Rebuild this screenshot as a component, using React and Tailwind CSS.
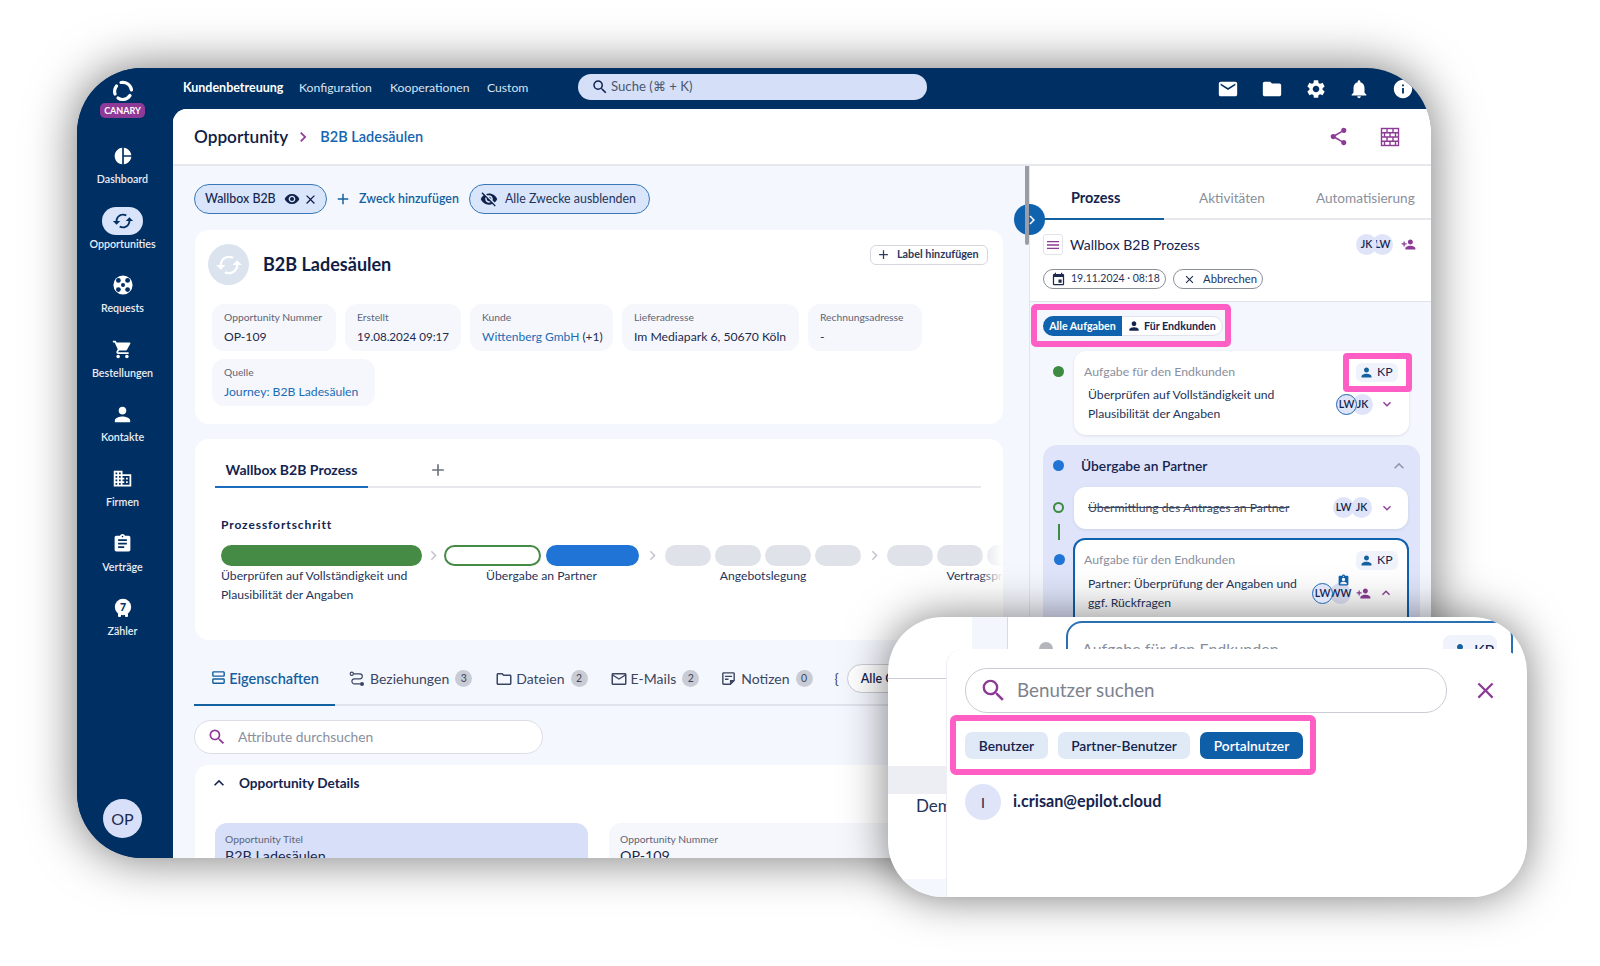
import React from "react";
import {
  MdEmail, MdFolder, MdSettings, MdNotifications, MdInfo, MdShare, MdSearch, MdClose, MdVisibility, MdVisibilityOff,
  MdAdd, MdPerson, MdPersonAdd, MdEvent, MdMenu, MdExpandMore, MdExpandLess, MdShoppingCart, MdDomain, MdAssignment,
  MdCached, MdPieChart, MdChevronRight, MdAssignmentInd, MdOutlineViewAgenda,
  MdOutlineFolder, MdOutlineEmail, MdOutlineStickyNote2,
} from "react-icons/md";

const Logo = () => (
  <svg width="22" height="22" viewBox="0 0 22 22" fill="none" stroke="white" strokeWidth="3.2" strokeLinecap="round">
    <path d="M9 2.5 C14 1.5 19 5 19.5 10" />
    <path d="M18 15.5 C15 20 9 20.5 6 18" />
    <path d="M3 14 C2 11 3 8 4.5 6" />
  </svg>
);

const Wheel = () => (
  <svg width="20" height="20" viewBox="0 0 20 20">
    <circle cx="10" cy="10" r="9.6" fill="white" />
    <circle cx="5.4" cy="5.4" r="2.4" fill="#003063" />
    <circle cx="14.6" cy="5.4" r="2.4" fill="#003063" />
    <circle cx="5.4" cy="14.6" r="2.4" fill="#003063" />
    <circle cx="14.6" cy="14.6" r="2.4" fill="#003063" />
    <circle cx="10" cy="10" r="2" fill="#003063" />
  </svg>
);

const Meter = () => (
  <svg width="18" height="20" viewBox="0 0 18 20">
    <circle cx="9" cy="9" r="8.2" fill="white" />
    <rect x="4" y="15" width="3" height="4" rx="1" fill="white" />
    <rect x="11" y="15" width="3" height="4" rx="1" fill="white" />
    <text x="9" y="13" textAnchor="middle" fontSize="10.5" fontWeight="900" fontFamily="Lato, sans-serif" fill="#003063">7</text>
  </svg>
);

const Bricks = () => (
  <svg width="20" height="20" viewBox="0 0 20 20" fill="none" stroke="#8d3a96" strokeWidth="1.4">
    <rect x="1.5" y="1.5" width="17" height="17" />
    <path d="M1.5 5.8h17M1.5 10h17M1.5 14.2h17M7 1.5v4.3M13 1.5v4.3M4.5 5.8v4.2M10 5.8v4.2M15.5 5.8v4.2M7 10v4.2M13 10v4.2M4.5 14.2v4.3M10 14.2v4.3M15.5 14.2v4.3" />
  </svg>
);

const Relation = () => (
  <svg width="16" height="16" viewBox="0 0 16 16" fill="none" stroke="#3b4660" strokeWidth="1.2">
    <circle cx="2.8" cy="2.8" r="1.6" />
    <path d="M4.6 2.8h6.2a2.5 2.5 0 0 1 0 5H5.4a2.5 2.5 0 0 0 0 5h6" />
    <circle cx="13" cy="13" r="2" fill="#3b4660" stroke="none" />
  </svg>
);

const navItems = [
  { label: "Dashboard", icon: <MdPieChart size={20} color="white" /> },
  { label: "Opportunities", icon: <MdCached size={22} color="#003063" />, active: true },
  { label: "Requests", icon: <Wheel /> },
  { label: "Bestellungen", icon: <MdShoppingCart size={21} color="white" /> },
  { label: "Kontakte", icon: <MdPerson size={23} color="white" /> },
  { label: "Firmen", icon: <MdDomain size={21} color="white" /> },
  { label: "Verträge", icon: <MdAssignment size={21} color="white" /> },
  { label: "Zähler", icon: <Meter /> },
];

const Sidebar = () => (
  <aside className="w-[96px] shrink-0 flex flex-col items-center pr-[5px] bg-[#003063] pt-[12px] pb-[20px]">
    <Logo />
    <div className="mt-[1px] w-[45px] h-[15px] rounded-[5px] bg-[#8f3a97] text-white text-[9px] font-bold leading-[15px] text-center">CANARY</div>
    <nav className="mt-[24px] flex flex-col gap-[14.6px] w-full">
      {navItems.map((n) => (
        <div key={n.label} className="h-[50px] flex flex-col items-center">
          <div className={n.active ? "w-[41px] h-[28px] rounded-[14px] bg-[#d9e3fa] flex items-center justify-center" : "w-[41px] h-[28px] flex items-center justify-center"}>{n.icon}</div>
          <div className="mt-[2px] text-[10.7px] leading-[14px] font-semibold text-[#e8edf6]">{n.label}</div>
        </div>
      ))}
    </nav>
    <div className="mt-auto w-[39px] h-[39px] rounded-full bg-[#d8dff8] text-[#1b2a52] text-[16px] flex items-center justify-center">OP</div>
  </aside>
);

const TopBar = () => (
  <header className="h-[41px] shrink-0 flex items-center text-white">
    <div className="flex items-center text-[12.2px] text-[#dbe4f2]">
      <span className="w-[116px] ml-[10px] text-[12.5px] font-bold text-white">Kundenbetreuung</span>
      <span className="w-[91px]">Konfiguration</span>
      <span className="w-[97px]">Kooperationen</span>
      <span className="w-[91px]">Custom</span>
    </div>
    <div className="w-[349px] h-[26px] mb-[3px] rounded-full bg-[#d5e0f8] flex items-center pl-[13px] text-[13.2px] text-[#4a5670]">
      <MdSearch size={18} color="#12264f" />
      <span className="ml-[2px]">Suche (⌘ + K)</span>
    </div>
    <div className="ml-auto flex items-center gap-[21.7px] pr-[17px]">
      <MdEmail size={22} /><MdFolder size={22} /><MdSettings size={22} /><MdNotifications size={22} /><MdInfo size={22} />
    </div>
  </header>
);

const Field = ({ label, value, link, extra, w, size }) => (
  <div className={`rounded-[12px] bg-[#f6f7fc] px-[12px] pt-[6px] h-[47px] ${w}`}>
    <div className="text-[10.3px] leading-[14px] text-[#5d6577] whitespace-nowrap">{label}</div>
    <div className={`mt-[5px] leading-[16px] whitespace-nowrap ${size} ${link ? "text-[#1b6cb5]" : "text-[#1c2a4e]"}`}>
      {value}{extra ? <span className="text-[#1c2a4e]"> {extra}</span> : null}
    </div>
  </div>
);

const Bar = ({ cls }) => <div className={`h-[21px] rounded-full ${cls}`} />;
const Chev = ({ w }) => (
  <div className={`${w} h-[21px] flex items-center justify-center`}><MdChevronRight size={19} color="#c4c7cf" /></div>
);

const Progress = () => (
  <div className="flex items-start mt-[12px] text-[12.2px] leading-[19px] text-[#26345a]">
    <div className="w-[201px] shrink-0">
      <Bar cls="bg-[#458a45]" />
      <div>Überprüfen auf Vollständigkeit und Plausibilität der Angaben</div>
    </div>
    <Chev w="w-[22px] shrink-0" />
    <div className="w-[195px] shrink-0">
      <div className="flex gap-[5px]"><Bar cls="flex-1 bg-white border-2 border-[#458a45]" /><Bar cls="flex-1 bg-[#1f74d6]" /></div>
      <div className="text-center">Übergabe an Partner</div>
    </div>
    <Chev w="w-[26px] shrink-0" />
    <div className="w-[196px] shrink-0">
      <div className="flex gap-[4px]">{[0, 1, 2, 3].map((i) => <Bar key={i} cls="flex-1 bg-[#e0e2e9]" />)}</div>
      <div className="text-center">Angebotslegung</div>
    </div>
    <Chev w="w-[26px] shrink-0" />
    <div className="w-[196px] shrink-0">
      <div className="flex gap-[4px]">{[0, 1, 2, 3].map((i) => <Bar key={i} cls="flex-1 bg-[#e0e2e9]" />)}</div>
      <div className="ml-[10px] text-center">Vertragsprüfung</div>
    </div>
  </div>
);

const Badge = ({ n }) => (
  <span className="ml-[6px] w-[17px] h-[17px] rounded-full bg-[#c9ccd4] text-[#3b4660] text-[10.5px] flex items-center justify-center">{n}</span>
);

const LeftPane = () => (
  <div className="flex-1 min-w-0 bg-[#f5f7fe] pl-[21px] pr-[24px] pt-[18px] overflow-hidden">
    <div className="h-[30px] flex items-center text-[12.4px]">
      <div className="w-[133px] h-[30px] rounded-full bg-[#d9e5fb] border border-[#3a78b5] flex items-center pl-[10px] text-[#14264f]">
        <span className="font-medium">Wallbox B2B</span>
        <MdVisibility size={16} className="ml-[8px]" color="#10224a" />
        <MdClose size={15} className="ml-[3px]" color="#10224a" />
      </div>
      <MdAdd size={18} color="#14619f" className="ml-[7px]" />
      <span className="ml-[7px] w-[110px] font-semibold text-[#14619f]">Zweck hinzufügen</span>
      <div className="w-[181px] h-[30px] rounded-full bg-[#d9e5fb] border border-[#3a78b5] flex items-center pl-[10px] text-[#26345a]">
        <MdVisibilityOff size={18} color="#10224a" />
        <span className="ml-[7px] whitespace-nowrap">Alle Zwecke ausblenden</span>
      </div>
    </div>

    <section className="ml-px mt-[16px] h-[194px] w-[808px] rounded-[14px] bg-white relative pl-[13px] pt-[14px]">
      <div className="flex items-center">
        <div className="w-[41px] h-[41px] rounded-full bg-[#dbe3ee] flex items-center justify-center"><MdCached size={28} color="white" /></div>
        <h2 className="ml-[14px] text-[18px] font-bold text-[#0f1d45]">B2B Ladesäulen</h2>
        <button className="ml-auto mr-[15px] w-[118px] h-[20px] mt-[-20px] rounded-[6px] bg-white border border-[#d5d7de] flex items-center pl-[5px] text-[10.8px] font-bold text-[#2b3a5e]">
          <MdAdd size={15} color="#2b3a5e" /><span className="ml-[6px]">Label hinzufügen</span>
        </button>
      </div>
      <div className="ml-[4px] mt-[19px] flex flex-wrap gap-x-[9px] gap-y-[8px] w-[720px]">
        <Field w="w-[124px]" size="text-[12.2px]" label="Opportunity Nummer" value="OP-109" />
        <Field w="w-[116px]" size="text-[11.6px]" label="Erstellt" value="19.08.2024 09:17" />
        <Field w="w-[143px]" size="text-[12px]" label="Kunde" value="Wittenberg GmbH" link extra="(+1)" />
        <Field w="w-[177px]" size="text-[12.2px]" label="Lieferadresse" value="Im Mediapark 6, 50670 Köln" />
        <Field w="w-[114px]" size="text-[12.2px]" label="Rechnungsadresse" value="-" />
        <Field w="w-[163px]" size="text-[12.2px]" label="Quelle" value="Journey: B2B Ladesäulen" link />
      </div>
    </section>

    <section className="ml-px mt-[15px] h-[201px] w-[808px] rounded-[14px] bg-white pt-[17px] relative overflow-hidden">
      <div className="ml-[20px] w-[766px] flex border-b-2 border-[#e6e8ee] h-[32px]">
        <div className="w-[153px] h-[32px] border-b-2 border-[#1b6bbf] text-center text-[14px] font-bold text-[#14244f] leading-[28px]">Wallbox B2B Prozess</div>
        <MdAdd size={20} color="#6b7280" className="ml-[60px] mt-[4px]" />
      </div>
      <div className="ml-[26px]">
        <div className="mt-[29px] text-[12px] leading-[16px] font-bold tracking-[0.9px] text-[#14244f]">Prozessfortschritt</div>
        <Progress />
      </div>
      <div className="absolute right-0 top-[100px] w-[24px] h-[80px] bg-gradient-to-r from-transparent to-white" />
    </section>

    <div className="mt-[25px] w-[900px] h-[41px] flex items-start border-b-2 border-[#e0e3ec] text-[14px] text-[#3b4660] relative">
      <div className="w-[141px] h-[41px] border-b-2 border-[#14619f] flex items-start justify-center pt-[3px] text-[14.5px] font-semibold text-[#14619f]">
        <MdOutlineViewAgenda size={17} className="mt-[1px] mr-[2px]" /> Eigenschaften
      </div>
      <div className="ml-[14px] flex items-center pt-[3px]"><Relation /><span className="ml-[5px]">Beziehungen</span><Badge n="3" /></div>
      <div className="ml-[23px] flex items-center pt-[3px]"><MdOutlineFolder size={18} /><span className="ml-[3px]">Dateien</span><Badge n="2" /></div>
      <div className="ml-[22px] flex items-center pt-[3px]"><MdOutlineEmail size={18} /><span className="ml-[3px]">E-Mails</span><Badge n="2" /></div>
      <div className="ml-[21px] flex items-center pt-[3px]"><MdOutlineStickyNote2 size={17} /><span className="ml-[4px]">Notizen</span><Badge n="0" /></div>
      <span className="ml-[22px] pt-[3px]">{"{"}</span>
      <div className="ml-[8px] w-[120px] h-[29px] -mt-[1px] rounded-full border border-[#c9ccd4] bg-white pl-[13px] text-[12.5px] font-semibold text-[#14244f] leading-[27px]">Alle Gruppen</div>
    </div>

    <div className="mt-[14px] w-[349px] h-[34px] rounded-full bg-white border border-[#dcdee5] flex items-center pl-[12px] text-[13.8px] text-[#8a8f9c]">
      <MdSearch size={20} color="#8d3a96" /><span className="ml-[11px]">Attribute durchsuchen</span>
    </div>

    <section className="ml-px mt-[11px] w-[808px] h-[200px] rounded-[14px] bg-white">
      <div className="flex items-center h-[36px] pl-[14px] text-[13.6px] font-bold text-[#14244f]">
        <MdExpandLess size={20} color="#14244f" /><span className="ml-[10px]">Opportunity Details</span>
      </div>
      <div className="mt-[22px] ml-[20px] flex gap-[21px]">
        <div className="w-[373px] h-[60px] rounded-[12px] bg-[#d8dff8] pl-[10px] pt-[9px]">
          <div className="text-[10.3px] leading-[14px] text-[#5d6577]">Opportunity Titel</div>
          <div className="text-[14.3px] leading-[18px] text-[#1c2a4e] mt-[1px]">B2B Ladesäulen</div>
        </div>
        <div className="w-[373px] h-[60px] rounded-[12px] bg-[#f6f7fc] pl-[11px] pt-[9px]">
          <div className="text-[10.3px] leading-[14px] text-[#5d6577]">Opportunity Nummer</div>
          <div className="text-[14.3px] leading-[18px] text-[#1c2a4e] mt-[1px]">OP-109</div>
        </div>
      </div>
    </section>
  </div>
);

const Av = ({ t, ring, top }) => (
  <span className={`w-[21px] h-[21px] rounded-full bg-[#dfe4f8] flex items-center justify-center text-[10.5px] font-semibold text-[#14244f] ${top ? "relative z-10" : ""} ${ring ? "border border-[#1d68b0]" : ""}`}>{t}</span>
);

const Pair = ({ a, b, ring, gap }) => (
  <div className={`flex ${gap}`}><Av t={a} ring={ring} top /><Av t={b} /></div>
);

const KP = () => (
  <div className="w-[42px] h-[19px] rounded-[6px] bg-[#f0f3fc] flex items-center pl-[3px] text-[12.3px] text-[#14244f]">
    <MdPerson size={15} color="#14619f" /><span className="ml-[3px]">KP</span>
  </div>
);

const Dot = ({ cls, top }) => <span className={`absolute left-[-21px] w-[11px] h-[11px] rounded-full ${top} ${cls}`} />;

const RightPane = () => (
  <div className="w-[402px] shrink-0 bg-white border-l border-[#e3e5ea] relative">
    <div className="h-[54px] flex border-b-2 border-[#e6e8ee] text-[13.6px] relative">
      <div className="w-[134px] h-[54px] border-b-2 border-[#14619f] pl-[41px] pt-[23px] leading-[18px] text-[14.5px] font-bold text-[#14244f]">Prozess</div>
      <div className="ml-[35px] pt-[23px] leading-[18px] text-[#8a8f9c]">Aktivitäten</div>
      <div className="ml-[51px] pt-[23px] leading-[18px] text-[#8a8f9c]">Automatisierung</div>
    </div>
    <div className="h-[82px] border-b border-[#e0e3ec] pl-[13px] pr-[14px] pt-[14px]">
      <div className="flex items-center h-[21px]">
        <div className="w-[20px] h-[21px] rounded-[3px] border border-[#e0e3ec] flex items-center justify-center"><MdMenu size={16} color="#8d3a96" /></div>
        <span className="ml-[7px] text-[14px] text-[#14244f]">Wallbox B2B Prozess</span>
        <div className="ml-auto mr-[8px]"><Pair a="JK" b="LW" gap="-space-x-[5px]" /></div>
        <MdPersonAdd size={15} color="#8d3a96" className="mr-[1px]" />
      </div>
      <div className="mt-[14px] flex gap-[7px] text-[11.3px] text-[#26345a]">
        <div className="w-[123px] h-[20px] rounded-full border border-[#8b8f98] flex items-center pl-[7px] whitespace-nowrap text-[10.5px]"><MdEvent size={15} color="#1b2a4e" /><span className="ml-[5px]">19.11.2024 · 08:18</span></div>
        <div className="w-[90px] h-[20px] rounded-full border border-[#8b8f98] flex items-center pl-[9px]"><MdClose size={13} color="#1b2a4e" /><span className="ml-[7px]">Abbrechen</span></div>
      </div>
    </div>
    <div className="bg-[#f5f7fe] h-[600px] pl-[13px] pt-[14px]">
      <div className="relative w-[180px] h-[20px] flex rounded-full bg-white border border-[#e0e3ec] text-[10.7px] font-bold">
        <div className="w-[79px] h-[20px] -mt-px -ml-px rounded-l-full bg-[#0f62ae] text-white text-center leading-[20px]">Alle Aufgaben</div>
        <div className="flex items-center pl-[5px] text-[#14244f]"><MdPerson size={14} color="#14244f" /><span className="ml-[3px]">Für Endkunden</span></div>
        <div className="absolute -left-[13px] -top-[13px] w-[200px] h-[43px] border-[6px] border-[#ff5ec4] rounded-[5px]" />
      </div>

      <div className="relative ml-[31px] mt-[15px] w-[335px] h-[84px] rounded-[12px] bg-white shadow-[0_1px_3px_rgba(30,40,90,0.12)] pl-[10px] pt-[13px]">
        <Dot cls="bg-[#3d8b40]" top="top-[15px]" />
        <div className="text-[12.3px] leading-[16px] text-[#8a8f9c]">Aufgabe für den Endkunden</div>
        <div className="absolute right-[11px] top-[12px]"><KP /></div>
        <div className="absolute -right-[3px] top-[2px] w-[69px] h-[39px] border-[6px] border-[#ff5ec4] rounded-[4px]" />
        <div className="ml-[4px] mt-[5px] w-[210px] text-[12.2px] leading-[19px] text-[#26345a]">Überprüfen auf Vollständigkeit und Plausibilität der Angaben</div>
        <div className="absolute right-[36px] top-[43px]"><Pair a="LW" b="JK" ring gap="-space-x-[5px]" /></div>
        <MdExpandMore size={16} color="#8d3a96" className="absolute right-[14px] top-[45px]" />
      </div>

      <div className="relative mt-[10px] w-[377px] h-[300px] rounded-[14px] bg-[#dfe4fa] pl-[31px] pt-[2px]">
        <div className="relative h-[38px] mb-[2px] flex items-center">
          <Dot cls="bg-[#1f74d6]" top="top-[13px]" />
          <span className="ml-[7px] text-[13.8px] font-semibold text-[#14244f]">Übergabe an Partner</span>
          <MdExpandLess size={20} color="#9097ab" className="absolute right-[11px] top-[9px]" />
        </div>
        <div className="relative w-[334px] h-[42px] rounded-[12px] bg-white flex items-center pl-[14px] text-[12.2px] text-[#3b4660] shadow-[0_1px_3px_rgba(30,40,90,0.1)]">
          <span className="absolute left-[-21px] top-[15px] w-[11px] h-[11px] rounded-full border-2 border-[#3d8b40]" />
          <span className="absolute left-[-16px] top-[37px] w-[2px] h-[16px] bg-[#3d8b40]" />
          <span className="line-through">Übermittlung des Antrages an Partner</span>
          <div className="absolute right-[36px] top-[10px]"><Pair a="LW" b="JK" gap="-space-x-[3px]" /></div>
          <MdExpandMore size={16} color="#8d3a96" className="absolute right-[13px] top-[13px]" />
        </div>
        <div className="relative mt-[9px] w-[336px] -ml-px h-[120px] rounded-[12px] bg-white border-2 border-[#0f62ae] pl-[9px] pt-[12px]">
          <Dot cls="bg-[#1f74d6]" top="top-[14px]" />
          <div className="text-[12.3px] leading-[16px] text-[#8a8f9c]">Aufgabe für den Endkunden</div>
          <div className="absolute right-[9px] top-[11px]"><KP /></div>
          <div className="ml-[4px] mt-[6px] w-[225px] text-[12.2px] leading-[19px] text-[#26345a]">Partner: Überprüfung der Angaben und ggf. Rückfragen</div>
          <div className="absolute left-[237px] top-[43px]"><Pair a="LW" b="WW" ring gap="-space-x-[3px]" /></div>
          <MdAssignmentInd size={13} color="#0f62ae" className="absolute left-[262px] top-[34px]" />
          <MdPersonAdd size={15} color="#8d3a96" className="absolute left-[281px] top-[46px]" />
          <MdExpandLess size={16} color="#8d3a96" className="absolute right-[13px] top-[45px]" />
        </div>
      </div>
    </div>
    <div className="absolute left-[-16px] top-[38px] w-[31px] h-[31px] rounded-full bg-[#0f62ae] flex items-center justify-center">
      <MdChevronRight size={18} color="white" className="ml-[4px]" />
    </div>
    <div className="absolute left-[-5px] top-0 w-[4px] h-[79px] rounded-b-full bg-[#9a9da5]" />
  </div>
);

const Overlay = () => (
  <div className="absolute left-[888px] top-[617px] w-[639px] h-[280px] rounded-[55px] bg-white overflow-hidden shadow-[0_0_45px_rgba(0,0,0,0.5)]">
    <div className="absolute left-[84px] top-0 w-[35px] h-[40px] bg-[#f4f6fd]" />
    <div className="absolute left-[119px] top-0 w-[1px] h-[40px] bg-[#d8dae2]" />
    <div className="absolute left-0 top-[61px] w-[60px] h-[1px] bg-[#c9ccd4]" />
    <div className="absolute left-0 top-[149px] w-[60px] h-[28px] bg-[#eceef3]" />
    <div className="absolute left-[28px] top-[176px] text-[17px] text-[#26345a]">Demo</div>
    <div className="absolute left-0 top-[262px] w-[60px] h-[18px] bg-[#f5f7fe]" />
    <span className="absolute left-[151px] top-[25px] w-[14px] h-[14px] rounded-full bg-[#b4b6bc]" />
    <div className="absolute left-[178px] top-[4px] w-[447px] h-[120px] rounded-[16px] bg-white border-2 border-[#2a70b5] pl-[14px] pt-[14px] text-[16px] text-[#8a8f9c]">
      Aufgabe für den Endkunden
      <div className="absolute right-[14px] top-[12px] w-[54px] h-[30px] rounded-[8px] bg-[#f0f3fc] flex items-center pl-[8px] text-[#14244f]"><MdPerson size={18} color="#14619f" /><span className="ml-[5px]">KP</span></div>
    </div>
    <div className="absolute left-[58px] top-[32px] right-0 bottom-0 rounded-tl-[16px] rounded-tr-[30px] bg-white border-l border-[#eceef3] pl-[18px]">
      <div className="flex items-center mt-[19px]">
        <div className="w-[482px] h-[45px] rounded-[22px] border border-[#c9ccd4] flex items-center pl-[13px] text-[18.8px] text-[#7d828e]">
          <MdSearch size={29} color="#8d3a96" /><span className="ml-[9px]">Benutzer suchen</span>
        </div>
        <MdClose size={27} color="#8d3a96" className="ml-[25px]" />
      </div>
      <div className="relative flex gap-[10px] mt-[19px] text-[13.8px] font-semibold">
        <div className="w-[83px] h-[27px] rounded-[7px] bg-[#e0eaf6] text-[#14244f] text-center leading-[27px]">Benutzer</div>
        <div className="w-[132px] h-[27px] rounded-[7px] bg-[#e0eaf6] text-[#14244f] text-center leading-[27px]">Partner-Benutzer</div>
        <div className="w-[103px] h-[27px] rounded-[7px] bg-[#0f5ea8] text-white text-center leading-[27px]">Portalnutzer</div>
        <div className="absolute -left-[15px] -top-[17px] w-[366px] h-[60px] border-[6px] border-[#ff5ec4] rounded-[6px]" />
      </div>
      <div className="mt-[25px] flex items-center">
        <div className="w-[36px] h-[36px] rounded-full bg-[#dfe4f8] text-[14px] text-[#14244f] flex items-center justify-center">I</div>
        <span className="ml-[12px] -mt-[2px] text-[16.2px] font-bold text-[#14244f]">i.crisan@epilot.cloud</span>
      </div>
    </div>
  </div>
);

export default function App() {
  return (
    <div className="relative w-[1600px] h-[966px] overflow-hidden bg-white font-['Lato',sans-serif]">
      <div className="absolute left-[77px] top-[68px] w-[1354px] h-[790px] rounded-[65px] overflow-hidden bg-[#003063] flex shadow-[0_0_50px_rgba(0,0,0,0.55)]">
        <Sidebar />
        <div className="flex-1 min-w-0 flex flex-col">
          <TopBar />
          <div className="flex-1 min-h-0 rounded-tl-[14px] overflow-hidden flex flex-col bg-white">
            <div className="h-[57px] shrink-0 bg-white border-b-2 border-[#e6e8ee] flex items-center pl-[21px] pr-[31px]">
              <span className="text-[17.2px] font-semibold text-[#0f1d45]">Opportunity</span>
              <MdChevronRight size={20} color="#8d3a96" className="ml-[5px]" />
              <span className="ml-[7px] text-[14.5px] font-semibold text-[#1565b0]">B2B Ladesäulen</span>
              <MdShare size={21} color="#8d3a96" className="ml-auto" />
              <div className="ml-[31px]"><Bricks /></div>
            </div>
            <div className="flex-1 min-h-0 flex">
              <LeftPane />
              <RightPane />
            </div>
          </div>
        </div>
      </div>
      <Overlay />
    </div>
  );
}
